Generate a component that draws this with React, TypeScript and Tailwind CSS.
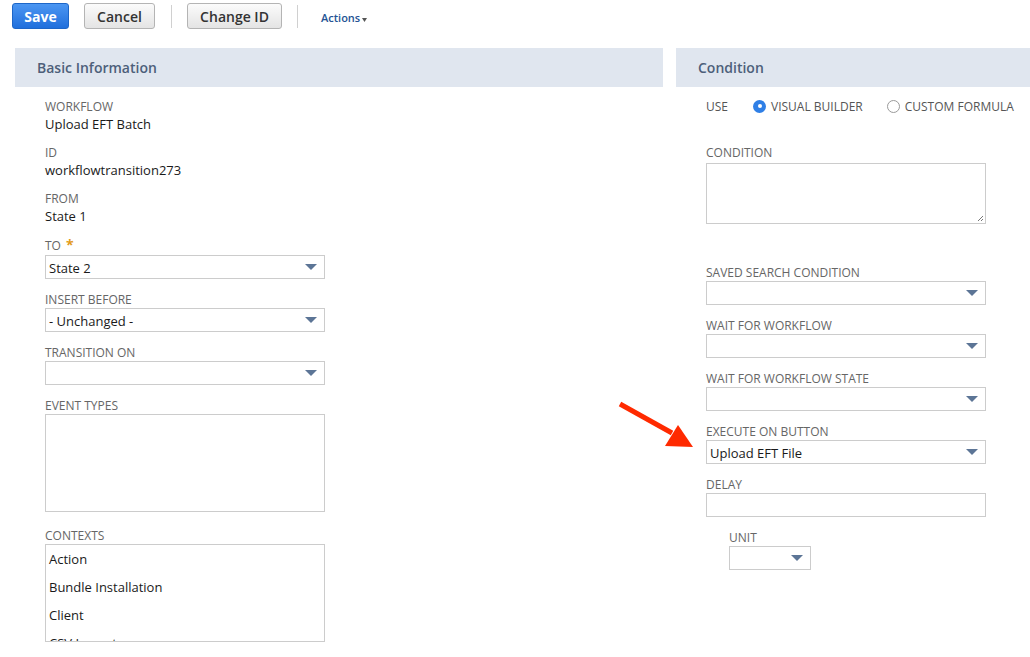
import React from "react";

const FONT = "font-['Open_Sans',_'Liberation_Sans',_sans-serif]";

function Label({ children, className = "" }: { children: React.ReactNode; className?: string }) {
  return (
    <div className={`h-4 text-[12px] leading-[18px] text-[#666] uppercase ${className}`}>{children}</div>
  );
}

function Caret() {
  return (
    <svg width="12" height="6" viewBox="0 0 12 6" className="shrink-0">
      <path d="M0 0 H12 L6 6 Z" fill="#5c7596" />
    </svg>
  );
}

function Select({ value = "", className = "" }: { value?: string; className?: string }) {
  return (
    <div
      className={`h-6 border border-[#cccccc] bg-white flex items-center justify-between pl-[3px] pr-[7px] ${className}`}
    >
      <span className="pt-[2px] text-[13px] leading-[18px] text-[#1a1a1a]">{value}</span>
      <Caret />
    </div>
  );
}

function Header({ title }: { title: string }) {
  return (
    <div className="h-[39px] bg-[#e0e6ef] flex items-center pl-[22px]">
      <span className="text-[14px] font-semibold text-[#4d5f7a]">{title}</span>
    </div>
  );
}

function ReadOnly({ label, value, className = "" }: { label: string; value: string; className?: string }) {
  return (
    <div className={className}>
      <Label>{label}</Label>
      <div className="mt-px text-[13px] leading-[18px] text-[#1a1a1a]">{value}</div>
    </div>
  );
}

function Radio({ checked, label }: { checked?: boolean; label: string }) {
  return (
    <div className="flex items-center gap-[5px]">
      {checked ? (
        <span className="w-[13px] h-[13px] rounded-full bg-[#2f7fe6] flex items-center justify-center">
          <span className="w-[4px] h-[4px] rounded-full bg-white" />
        </span>
      ) : (
        <span className="w-[13px] h-[13px] rounded-full border border-[#9a9a9a] bg-white" />
      )}
      <span className="h-4 text-[12px] leading-[18px] text-[#555]">{label}</span>
    </div>
  );
}

export default function App() {
  return (
    <div className={`relative w-[1030px] h-[657px] overflow-hidden bg-white ${FONT}`}>
      {/* toolbar */}
      <div className="flex items-center pl-[12px] pt-[3px] h-[29px]">
        <button className="h-[26px] w-[57px] rounded-[3px] border border-[#1d66c8] bg-gradient-to-b from-[#4b96f2] to-[#1f6fdc] text-white text-[14px] font-bold">
          Save
        </button>
        <button className="ml-[15px] h-[26px] w-[71px] rounded-[3px] border border-[#b4b4b4] bg-gradient-to-b from-[#fbfbfb] to-[#e4e4e4] text-[#333] text-[14px] font-semibold">
          Cancel
        </button>
        <div className="ml-[16px] w-px h-[23px] bg-[#d0d0d0]" />
        <button className="ml-[15px] h-[26px] w-[95px] rounded-[3px] border border-[#b4b4b4] bg-gradient-to-b from-[#fbfbfb] to-[#e4e4e4] text-[#333] text-[14px] font-semibold">
          Change ID
        </button>
        <div className="ml-[15px] w-px h-[23px] bg-[#d0d0d0]" />
        <div className="ml-[23px] mt-1 flex items-center gap-[2px]">
          <span className="text-[11px] font-semibold text-[#255394]">Actions</span>
          <svg width="5" height="4" viewBox="0 0 5 4" className="mt-[3px]">
            <path d="M0 0 H5 L2.5 4 Z" fill="#555" />
          </svg>
        </div>
      </div>

      <div className="flex mt-[19px]">
        {/* left column */}
        <div className="ml-[15px] w-[648px] shrink-0">
          <Header title="Basic Information" />
          <div className="pl-[30px]">
            <ReadOnly className="mt-[11px]" label="Workflow" value="Upload EFT Batch" />
            <ReadOnly className="mt-[11px]" label="ID" value="workflowtransition273" />
            <ReadOnly className="mt-[11px]" label="From" value="State 1" />

            <div className="mt-[12px] w-[280px]">
              <Label>
                TO <span className="text-[#e29b1c] text-[14px] font-bold leading-3 ml-[2px]">*</span>
              </Label>
              <Select className="mt-[2px]" value="State 2" />
            </div>
            <div className="mt-[12px] w-[280px]">
              <Label>Insert Before</Label>
              <Select className="mt-px" value="- Unchanged -" />
            </div>
            <div className="mt-[12px] w-[280px]">
              <Label>Transition On</Label>
              <Select className="mt-px" />
            </div>
            <div className="mt-[12px] w-[280px]">
              <Label>Event Types</Label>
              <div className="mt-px h-[98px] border border-[#cccccc]" />
            </div>
            <div className="mt-[15px] w-[280px]">
              <Label>Contexts</Label>
              <div className="mt-px h-[98px] border border-[#cccccc] overflow-hidden">
                {["Action", "Bundle Installation", "Client", "CSV Import"].map((c) => (
                  <div key={c} className="h-[28px] leading-[28px] pl-[3px] text-[13px] text-[#1a1a1a]">
                    {c}
                  </div>
                ))}
              </div>
            </div>
          </div>
        </div>

        {/* right column */}
        <div className="ml-[13px] w-[380px] shrink-0">
          <Header title="Condition" />
          <div className="pl-[30px]">
            <div className="mt-[11px] flex items-center h-4">
              <span className="h-4 text-[12px] leading-[18px] text-[#555]">USE</span>
              <div className="ml-[25px]">
                <Radio checked label="VISUAL BUILDER" />
              </div>
              <div className="ml-[24px]">
                <Radio label="CUSTOM FORMULA" />
              </div>
            </div>

            <div className="mt-[30px] w-[280px]">
              <Label>Condition</Label>
              <div className="relative mt-[3px] h-[61px] border border-[#cccccc]">
                <svg width="7" height="7" viewBox="0 0 7 7" className="absolute right-[1px] bottom-[1px]">
                  <path d="M1 6 L6 1 M4 6 L6 4" stroke="#777" strokeWidth="1" />
                </svg>
              </div>
            </div>

            <div className="mt-[40px] w-[280px]">
              <Label>Saved Search Condition</Label>
              <Select className="mt-px" />
            </div>
            <div className="mt-[12px] w-[280px]">
              <Label>Wait For Workflow</Label>
              <Select className="mt-px" />
            </div>
            <div className="mt-[12px] w-[280px]">
              <Label>Wait For Workflow State</Label>
              <Select className="mt-px" />
            </div>
            <div className="mt-[12px] w-[280px]">
              <Label>Execute On Button</Label>
              <Select className="mt-px" value="Upload EFT File" />
            </div>
            <div className="mt-[12px] w-[280px]">
              <Label>Delay</Label>
              <div className="mt-px h-6 border border-[#cccccc]" />
            </div>
            <div className="mt-[12px] ml-[23px] w-[82px]">
              <Label>Unit</Label>
              <Select className="mt-px" />
            </div>
          </div>
        </div>
      </div>

      {/* red annotation arrow */}
      <svg
        width="90"
        height="60"
        viewBox="0 0 90 60"
        className="absolute left-[610px] top-[395px]"
      >
        <path d="M10 9 L62 38" stroke="#ff2a00" strokeWidth="5" strokeLinecap="butt" />
        <path d="M83 52 L55 51 L68 30 Z" fill="#ff2a00" />
      </svg>
    </div>
  );
}
